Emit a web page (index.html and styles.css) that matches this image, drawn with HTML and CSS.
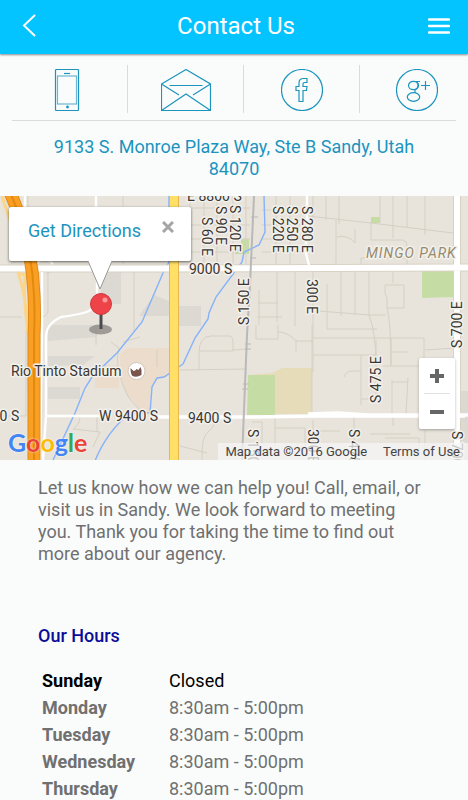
FILE: index.html
```html
<!DOCTYPE html>
<html lang="en">
<head>
    <meta charset="UTF-8">
    <meta name="viewport" content="width=device-width, initial-scale=1.0">
    <title>Contact Us</title>
    <link rel="stylesheet" href="styles.css">
</head>
<body>

    <header class="topbar">
        <button type="button" class="icon-btn" aria-label="Back">
            <svg width="14" height="24" viewBox="0 0 14 24"><path d="M13 1L2 11.500 13 22"/></svg>
        </button>
        <h1>Contact Us</h1>
        <button type="button" class="icon-btn menu-btn" aria-label="Menu">
            <svg width="22" height="16" viewBox="0 0 22 16"><path d="M1 1.500h20M1 8h20M1 14.500h20"/></svg>
        </button>
    </header>

    <nav class="contact-links">
        <a href="#" aria-label="Call">
            <svg width="42" height="42" viewBox="0 0 42 42">
                <rect x="9.500" y=".5" width="23" height="41" rx="1"/>
                <rect class="screen" x="11.500" y="7" width="19" height="28"/>
                <path d="M18 4.500h6"/>
                <circle class="dot" cx="21.500" cy="38" r="1.400"/>
            </svg>
        </a>
        <a href="#" aria-label="Email">
            <svg width="50" height="42" viewBox="0 0 50 42">
                <path d="M.5 15L25 .5 49.500 15v26.500H.5zM.5 15l17.500 11M49.500 15L32 26M8.500 16.500h33M.5 41.500L25 25l24.500 16.500"/>
            </svg>
        </a>
        <a href="#" aria-label="Facebook">
            <svg width="42" height="42" viewBox="0 0 42 42">
                <circle cx="21" cy="21" r="20.500"/>
                <path d="M18 32.500V21.500h-3v-4h3V14q0-4.500 4.500-4.500H26v4h-2.500q-1.500 0-1.500 1.500v2.500h4l-.5 4H22v11z"/>
            </svg>
        </a>
        <a href="#" aria-label="Google Plus">
            <svg width="42" height="42" viewBox="0 0 42 42">
                <circle cx="21" cy="21" r="20.500"/>
                <path d="M24 12.500H18M29.500 12v9M25 16.500h9"/>
                <ellipse cx="17.500" cy="16.500" rx="5" ry="4.200"/>
                <path d="M21 13.500q2 2 .5 5-1 1.500-2.500 2.500v3"/>
                <ellipse cx="17.500" cy="28" rx="6.200" ry="4.300"/>
            </svg>
        </a>
    </nav>

    <p class="address"><a href="#">9133 S. Monroe Plaza Way, Ste B Sandy, Utah 84070</a></p>

    <section class="map">
        <svg class="map-canvas" viewBox="0 196 468 264" preserveAspectRatio="xMidYMid slice" role="img" aria-label="Map of Sandy, Utah">
            <rect class="land" x="-400" y="196" width="1268" height="264"/>

            <!-- blocks and parks -->
            <path class="block" d="M101 272h20v32h-20zM48 325h50l-1 12-49 4zM48 356h47l-12 9-35 1zM48 387h32v12H48zM154 295l15 6v15h-30zM179 306h22v20h-22zM453 391h15v69h-11V391z"/>
            <path class="stadium" d="M95 365h24v23H95zM120 355q3-7 12-7h37v28l-12 4-7 10v24h-8q-6-12-14-17-8-8-8-42z"/>
            <path class="sand" d="M248 375l24-2 10-5h30v46h-37v-39z"/>
            <path class="park" d="M241 239h8v15h-14l1-5h5zM371 217h9v6h-9zM422 271h31v26l-31 1zM248 375h27v40h-28z"/>

            <!-- side streets -->
            <path class="street" d="M123 196v69M47 275q0-3 4-3M48 272v40q-2 5-7 5M0 317h22M26 330v86M134 272v60M96 325v20M28 274V196M0 416h26M190 196v68M204 196v68M217 196v68M233 196v68M246 196v68M180 208h70M180 225h70M180 239h70M180 252h65M276 196v68M290 196v68M262 210h45M262 225h45M262 239h45M262 252h45"/>
            <path class="street" d="M313 196v24M326 196v24M339 196v28M371 222v18h32q4 1 4 6v20M380 196v27M393 196v42M407 196v31M425 196v39M308 216l63 7 82 10M336 220v44M337 237q10-3 18 6v-14M361 266v-8h45M259 290v35M258 303h20M257 317h25M277 272v50M295 272v54M313 272v100M327 284v45h50M341 272v44M355 272v43M369 272v43q7 18 7 50M393 272v11M385 285h19v23h-17v-10l-2-5zM318 311l52 4h16M387 308q4 15 4 58M313 338h111v42M391 338v28M313 355h62M361 355v50M376 340v62M344 377q2-6 8-6h9M391 352h17M383 366h36M392 380v34M408 378l-2 36M392 382h16M361 399h12M425 350l30-2"/>
            <path class="street" d="M199 370v-17q0-17 12-17h18q4 0 4 6v9H200M233 350l15-1M180 370l67-1M256 325v14h22v-14M278 332q10 0 18 9h17M296 340v12M312 325v90M217 415q-1 10-8 16-8 5-7 29M180 446l27 7M275 416v32M275 428h30v20M252 422h10v26M313 420v40M320 431h20M354 417v43M370 434h40M393 416v10M385 438h34v20M425 430v30M80 418q-1 7-7 11l27 3-7 15M97 417v15M119 348q-6 20 10 50l15 17M119 348l-8-6M123 342l17-5M157 350v17"/>

            <!-- water -->
            <path class="water" d="M264 196l1 36-6 13-15 7-2 10-26 35-7 16-1 6-13 19-12 26-3 2-16 11-7 1-5 9-2 26h-20q-25 20-37 53"/>
            <path class="water" d="M169 196v66l-6 11-21 49-25 31-25 24-7 11-10 25-22 47"/>

            <!-- white roads -->
            <path class="road-edge" d="M-400 268.500H160L468 267.500h400M457 196v264"/>
            <path class="road" d="M-400 268.500H160L468 267.500h400M457 190v270"/>
            <path class="road thin" d="M25 196v70M96 196v70M42 272v50l-2 138M97 280v12q3 12-8 19-6 3-28 6-15 7-15 20v78l-3 45M47 416h53M307 196v40l-2 14 4 15M36 264l9-8 8 8"/>
            <path class="road mid" d="M155 417h100l60-1h150M308 414l30-1 30 2h100"/>
            <path class="rail" d="M254 196l-4 89-3 50-5 125"/>
            <path class="rail-tie" d="M251 217h7M250 258h6M245 344h6M245 349h6M243 384h6M242 389h6"/>

            <!-- highways -->
            <path class="ramp" d="M2 196q7 25 22 54M17 273l8 2q-2 25 4 65v50M18 273q7 18 10 55"/>
            <path class="highway-edge" d="M9 190q23 50 25 105 1 20 0 40v130"/>
            <path class="highway" d="M9 190q23 50 25 105 1 20 0 40v130"/>
            <path class="highway-line" d="M9 190q23 50 25 105 1 20 0 40v130"/>
            <path class="main-edge" d="M174 190v275"/>
            <path class="main" d="M174 190v275"/>

            <!-- labels -->
            <g class="label">
                <text x="187" y="201">E 8800 S</text>
                <text x="189" y="274">9000 S</text>
                <text x="99" y="421">W 9400 S</text>
                <text x="188" y="423">9400 S</text>
                <text x="-24" y="421">9400 S</text>
                <text transform="translate(202 217) rotate(90)">S 60 E</text>
                <text transform="translate(216 206) rotate(90)">S 90 E</text>
                <text transform="translate(230 205) rotate(90)">S 120 E</text>
                <text transform="translate(273 206) rotate(90)">S 220 E</text>
                <text transform="translate(287 206) rotate(90)">S 250 E</text>
                <text transform="translate(302 206) rotate(90)">S 280 E</text>
                <text transform="translate(307 279) rotate(90)">300 E</text>
                <text transform="translate(249 325) rotate(-90)">S 150 E</text>
                <text transform="translate(381 403) rotate(-90)">S 475 E</text>
                <text transform="translate(462 348) rotate(-90)">S 700 E</text>
                <text transform="translate(248 429) rotate(90)">S 150 E</text>
                <text transform="translate(308 429) rotate(90)">300 E</text>
                <text transform="translate(349 429) rotate(90)">S 475 E</text>
                <text transform="translate(452 431) rotate(90)">S 700 E</text>
                <text x="11" y="376">Rio Tinto Stadium</text>
                <text class="area" x="366" y="258">MINGO PARK</text>
            </g>
            <circle class="poi" cx="136.500" cy="371" r="8.500"/>
            <path class="poi-icon" d="M130.500 368l3 3q2 0 3-2l2 1 2-3 1 3v5q-5 3-9 1-2-2-2-8z"/>

            <!-- pin -->
            <ellipse class="pin-shadow" cx="100.500" cy="329.500" rx="11.500" ry="5"/>
            <path class="pin-stem" d="M101 312v17"/>
            <circle class="pin-head" cx="101" cy="304" r="10.500"/>
            <circle class="pin-shine" cx="105" cy="300" r="2.500"/>
        </svg>

        <div class="callout">
            <a href="#">Get Directions</a>
            <button type="button" aria-label="Close">
                <svg width="12" height="12" viewBox="0 0 12 12"><path d="M1 1l10 10M11 1L1 11"/></svg>
            </button>
            <svg class="callout-tip" width="24" height="30" viewBox="0 0 24 30"><path d="M0 0l12 28L24 0"/></svg>
        </div>

        <div class="zoom">
            <button type="button" aria-label="Zoom in">
                <svg width="14" height="14" viewBox="0 0 14 14"><path d="M7 0v14M0 7h14"/></svg>
            </button>
            <button type="button" aria-label="Zoom out">
                <svg width="14" height="14" viewBox="0 0 14 14"><path d="M0 7h14"/></svg>
            </button>
        </div>

        <div class="google"><span class="g-blue">G</span><span class="g-red">o</span><span class="g-yellow">o</span><span class="g-blue">g</span><span class="g-green">l</span><span class="g-red">e</span></div>
        <div class="credits">
            <span>Map data ©2016 Google</span>
            <a href="#">Terms of Use</a>
        </div>
    </section>

    <main class="content">
        <p>Let us know how we can help you! Call, email, or visit us in Sandy. We look forward to meeting you. Thank you for taking the time to find out more about our agency.</p>

        <h2>Our Hours</h2>
        <table class="hours">
            <tbody>
                <tr class="today">
                    <th scope="row">Sunday</th>
                    <td>Closed</td>
                </tr>
                <tr>
                    <th scope="row">Monday</th>
                    <td>8:30am - 5:00pm</td>
                </tr>
                <tr>
                    <th scope="row">Tuesday</th>
                    <td>8:30am - 5:00pm</td>
                </tr>
                <tr>
                    <th scope="row">Wednesday</th>
                    <td>8:30am - 5:00pm</td>
                </tr>
                <tr>
                    <th scope="row">Thursday</th>
                    <td>8:30am - 5:00pm</td>
                </tr>
            </tbody>
        </table>
    </main>

</body>
</html>
```
FILE: styles.css
```css
* {
    box-sizing: border-box;
}

body {
    margin: 0;
    background-color: #fafcfc;
    color: #707070;
    font-family: Roboto, Arial, sans-serif;
    font-size: 18px;
    line-height: 22px;
}

a {
    color: #1c94be;
    text-decoration: none;
}

button {
    border: none;
    background: none;
    padding: 0;
    cursor: pointer;
}

svg {
    display: block;
    fill: none;
}

/* header */
.topbar {
    display: flex;
    align-items: center;
    justify-content: space-between;
    height: 54px;
    padding: 0 18px 2px 22px;
    background-color: #03c4ff;
    box-shadow: 0 1px 2px rgba(0, 0, 0, 0.45);
}

.topbar h1 {
    margin: 0;
    color: #fff;
    font-size: 24px;
    font-weight: 400;
    line-height: 30px;
}

.icon-btn {
    display: flex;
    align-items: center;
    width: 24px;
    height: 50px;
}

.icon-btn svg {
    stroke: #fff;
    stroke-width: 2;
}

.menu-btn {
    justify-content: flex-end;
}

.menu-btn svg {
    stroke-width: 2.4;
    stroke-linecap: round;
}

/* contact links */
.contact-links {
    display: grid;
    grid-template-columns: repeat(3, 1fr) 108px;
    margin-left: 12px;
    padding: 11px 0 7px;
}

.contact-links a {
    display: flex;
    align-items: center;
    justify-content: center;
    height: 48px;
    padding-top: 2px;
    border-right: 1px solid #d8dcdc;
}

.contact-links a:first-child {
    padding-right: 6px;
}

.contact-links a:last-child {
    border-right: none;
    padding-left: 6px;
}

.contact-links svg {
    stroke: #1c94be;
    stroke-width: 1.2;
}

.contact-links .screen {
    stroke: #6db5d2;
}

.contact-links .dot {
    fill: #1c94be;
    stroke: none;
}

.address {
    margin: 0 12px;
    padding: 15px 24px 16px;
    border-top: 1px solid #d8dcdc;
    text-align: center;
}

/* map */
.map {
    position: relative;
    height: 264px;
    overflow: hidden;
}

.map-canvas {
    width: 100%;
    height: 100%;
}

.land { fill: #e8e4dc; }
.block { fill: #dcd8d2; }
.stadium { fill: #ecdccb; }
.sand { fill: #e6dcba; }
.park { fill: #c5dca4; }
.street { stroke: #d5d0c3; stroke-width: 1; }
.water { stroke: #85b2fb; stroke-width: 1.4; }
.road-edge { stroke: #d8d2c4; stroke-width: 8; }
.road { stroke: #fff; stroke-width: 6; }
.road.thin { stroke-width: 2.4; }
.road.mid { stroke-width: 3.4; }
.rail { stroke: #b9b9b9; stroke-width: 2; }
.rail-tie { stroke: #b9b9b9; stroke-width: 1; }
.ramp { stroke: #fbd68a; stroke-width: 3; }
.highway-edge { stroke: #dc8b1e; stroke-width: 13; }
.highway { stroke: #fb9f22; stroke-width: 11; }
.highway-line { stroke: #e18a12; stroke-width: 2; }
.main-edge { stroke: #e5b94f; stroke-width: 10; }
.main { stroke: #ffdf66; stroke-width: 8; }

.label text {
    fill: #3a3632;
    font-size: 14px;
    stroke: #f3f1ec;
    stroke-width: 3;
    stroke-linejoin: round;
    paint-order: stroke;
}

.label .area {
    fill: #968a6c;
    font-style: italic;
    letter-spacing: 1px;
}

.poi { fill: #fff; stroke: #cfc8c0; }
.poi-icon { fill: #79564c; }
.pin-shadow { fill: #8c8a87; fill-opacity: 0.8; }
.pin-stem { stroke: #4c4c50; stroke-width: 3; }
.pin-head { fill: #ee4449; stroke: #cf363c; stroke-width: 1; }
.pin-shine { fill: #f99a9a; }

.callout {
    position: absolute;
    top: 11px;
    left: 9px;
    display: flex;
    align-items: center;
    width: 182px;
    height: 54px;
    padding: 0 17px 6px 19px;
    background-color: #fff;
    border-radius: 2px;
    box-shadow: 0 1px 3px rgba(0, 0, 0, 0.6);
}

.callout button {
    align-self: flex-start;
    margin: 14px 0 0 auto;
}

.callout button svg {
    stroke: #a5a5a5;
    stroke-width: 3;
}

.callout-tip {
    position: absolute;
    top: 100%;
    left: 79px;
    fill: #fff;
    stroke: #9b9994;
}

.zoom {
    position: absolute;
    right: 13px;
    bottom: 31px;
    width: 36px;
    padding: 0 5px;
    background-color: #fff;
    border-radius: 2px;
    box-shadow: 0 1px 3px rgba(0, 0, 0, 0.3);
}

.zoom button {
    display: flex;
    align-items: center;
    justify-content: center;
    width: 100%;
    height: 35px;
}

.zoom button + button {
    border-top: 1px solid #e0e0e0;
    height: 36px;
}

.zoom svg {
    stroke: #666;
    stroke-width: 4;
}

.google {
    position: absolute;
    left: 8px;
    bottom: 3px;
    font-family: Lato, sans-serif;
    font-size: 25px;
    font-weight: 700;
    line-height: 30px;
    text-shadow: 0 0 2px #fff;
}

.g-blue { color: #4285f4; }
.g-red { color: #ea4335; }
.g-yellow { color: #fbbc05; }
.g-green { color: #34a853; }

.credits {
    position: absolute;
    right: 0;
    bottom: 0;
    display: flex;
    gap: 16px;
    padding: 0 8px 0 7px;
    background-color: rgba(245, 245, 245, 0.75);
    color: #444;
    font-size: 13px;
    line-height: 17px;
}

.credits a {
    color: #444;
}

/* text and hours */
.content {
    padding: 17px 38px 0;
}

.content p {
    margin: 0 0 60px;
}

.content h2 {
    margin: 0 0 20px;
    color: #0c0c98;
    font-size: 18px;
    font-weight: 500;
}

.hours {
    border-collapse: collapse;
}

.hours th,
.hours td {
    height: 27px;
    padding: 0 4px;
    text-align: left;
}

.hours th {
    width: 127px;
    font-weight: 700;
}

.today {
    color: #000;
}
```
